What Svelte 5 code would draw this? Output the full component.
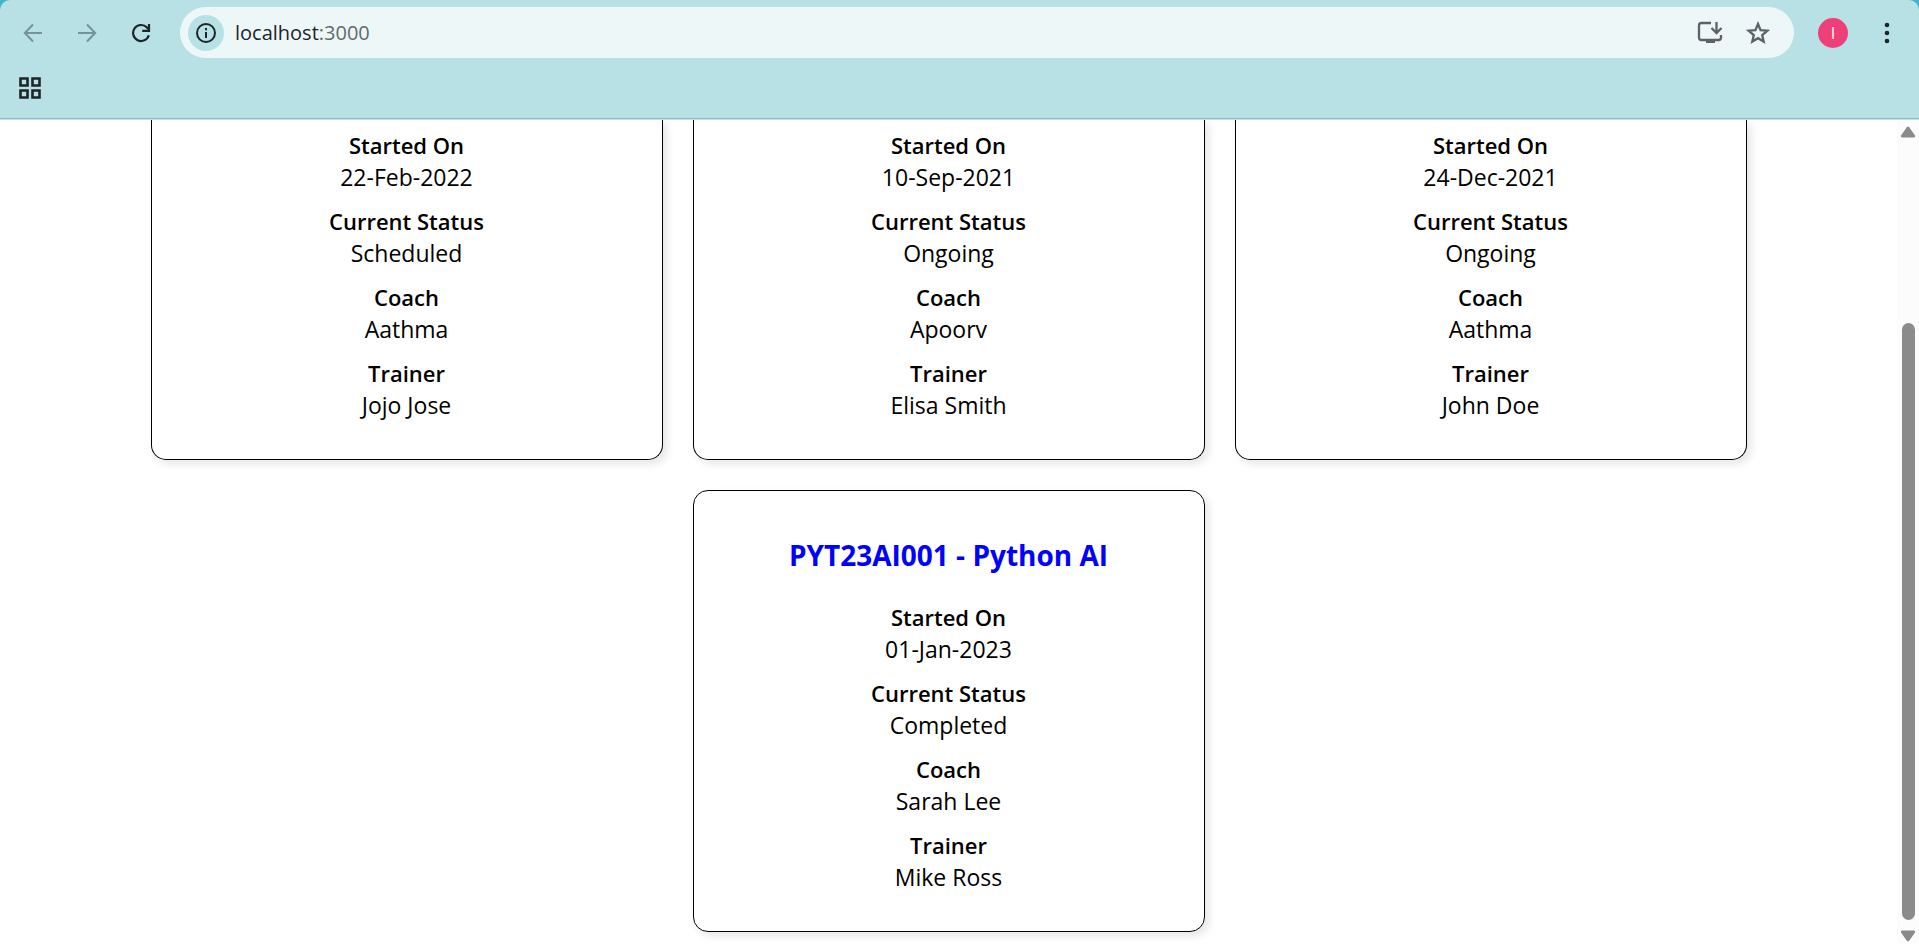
<script>
  const running = [
    { started: '22-Feb-2022', status: 'Scheduled', coach: 'Aathma', trainer: 'Jojo Jose' },
    { started: '10-Sep-2021', status: 'Ongoing', coach: 'Apoorv', trainer: 'Elisa Smith' },
    { started: '24-Dec-2021', status: 'Ongoing', coach: 'Aathma', trainer: 'John Doe' }
  ];
  const last = {
    title: 'PYT23AI001 - Python AI',
    started: '01-Jan-2023',
    status: 'Completed',
    coach: 'Sarah Lee',
    trainer: 'Mike Ross'
  };
</script>

{#snippet details(c)}
  <dl>
    <dt>Started On</dt>
    <dd>{c.started}</dd>
    <dt>Current Status</dt>
    <dd>{c.status}</dd>
    <dt>Coach</dt>
    <dd>{c.coach}</dd>
    <dt>Trainer</dt>
    <dd>{c.trainer}</dd>
  </dl>
{/snippet}

<div class="window">
  <header>
    <div class="chrome">
      <div class="toolbar">
        <nav>
          <button class="dim" aria-label="Back">
            <svg width="20" height="20" viewBox="0 0 20 20"><path d="M19 10H2M10 1.5 1.8 10l8.2 8.5" /></svg>
          </button>
          <button class="dim" aria-label="Forward">
            <svg width="20" height="20" viewBox="0 0 20 20"><path d="M1 10h17M10 1.5l8.2 8.5-8.2 8.5" /></svg>
          </button>
          <button aria-label="Reload">
            <svg width="20" height="20" viewBox="0 0 20 20">
              <path d="M17.8 12.2A8 8 0 1 1 16 4.6l1.2 1.5" stroke-width="2.2" />
              <path d="M18 1v6.8h-6.8" stroke-width="2.2" />
            </svg>
          </button>
        </nav>
        <div class="address">
          <button class="info" aria-label="View site information">
            <svg width="20" height="20" viewBox="0 0 20 20">
              <circle cx="10" cy="10" r="9" />
              <path d="M10 9v6M10 5v2.2" />
            </svg>
          </button>
          <span class="url" role="textbox" tabindex="0" aria-label="Address">localhost<span>:3000</span></span>
          <button class="tool" aria-label="Install app">
            <svg width="26" height="24" viewBox="0 0 26 24">
              <path d="M14 2H4.5A2.5 2.5 0 0 0 2 4.5v12A2.5 2.5 0 0 0 4.5 19h17a2.5 2.5 0 0 0 2.500-2.500V14" />
              <path d="M19.500 1v10M14.500 7l5 5 5-5" />
              <path d="M9 18.500h9V22H9z" fill="#5c6265" stroke="none" />
            </svg>
          </button>
          <button class="tool" aria-label="Bookmark this tab">
            <svg width="24" height="24" viewBox="0 0 24 24">
              <path d="m12 3 2.600 6.100 6.700.6-5.100 4.400 1.500 6.500L12 17.200l-5.700 3.400 1.500-6.500-5.100-4.400 6.700-.6z" />
            </svg>
          </button>
        </div>
        <button class="avatar" aria-label="Profile">I</button>
        <button class="menu" aria-label="Menu">
          <svg width="6" height="24" viewBox="0 0 6 24">
            <g fill="#1c2527" stroke="none">
              <circle cx="3" cy="4" r="2.300" /><circle cx="3" cy="12" r="2.300" /><circle cx="3" cy="20" r="2.300" />
            </g>
          </svg>
        </button>
      </div>
      <div class="bookmarks">
        <button aria-label="Apps">
          <svg width="22" height="22" viewBox="0 0 22 22">
            <path d="M1.500 1.500h7v7h-7zM13.500 1.500h7v7h-7zM1.500 13.500h7v7h-7zM13.500 13.500h7v7h-7z" stroke-width="2.600" />
          </svg>
        </button>
      </div>
    </div>
  </header>

  <div class="view">
    <main>
      {#each running as c}
        <article class="card cut">{@render details(c)}</article>
      {/each}
      <article class="card">
        <h3>{last.title}</h3>
        {@render details(last)}
      </article>
    </main>
    <div class="scrollbar" aria-hidden="true">
      <svg width="16" height="12" viewBox="0 0 16 12"><path d="M6.800 1.200 1 9.500Q.4 11.500 2 11.500h12q1.600 0 1-2L9.200 1.200Q8 0 6.800 1.200z" /></svg>
      <div class="track"><div class="thumb"></div></div>
      <svg width="16" height="12" viewBox="0 0 16 12"><path d="M6.800 10.800 1 2.500Q.4.500 2 .5h12q1.600 0 1 2l-5.800 8.300q-1.200 1.200-2.400 0z" /></svg>
    </div>
  </div>
</div>

<style>
  :global(body) {
    margin: 0;
    background: #fff;
  }
  .window {
    display: flex;
    flex-direction: column;
    height: 100vh;
    overflow: hidden;
    font-family: 'Segoe UI', 'Open Sans', 'Noto Sans', sans-serif;
    color: #000;
  }
  header {
    background: #48b2c8;
  }
  .chrome {
    background: #b8e1e6;
    border-radius: 10px 10px 0 0;
    border-bottom: 1px solid #90b8be;
    margin-bottom: 1px;
  }
  header {
    background: linear-gradient(#48b2c8 50%, #c3e2e6 50%);
  }
  .toolbar {
    display: flex;
    align-items: center;
    padding: 7px 17px 0 15px;
  }
  nav {
    display: flex;
    gap: 18px;
    margin-right: 21px;
  }
  button {
    display: flex;
    align-items: center;
    justify-content: center;
    width: 36px;
    height: 36px;
    padding: 0;
    border: 0;
    border-radius: 50%;
    background: none;
    font: inherit;
  }
  button svg {
    fill: none;
    stroke: #1c2527;
    stroke-width: 2;
  }
  .dim svg {
    stroke: #76939a;
  }
  .address {
    flex: 1;
    display: flex;
    align-items: center;
    height: 51px;
    padding: 0 18px 0 8px;
    border-radius: 26px;
    background: #edf7f8;
  }
  .info {
    background: #b8e1e6;
  }
  .url {
    flex: 1;
    margin-left: 11px;
    font-size: 20px;
    line-height: 28px;
    color: #1c2527;
  }
  .url span {
    color: #64696c;
  }
  .tool {
    margin-left: 12px;
  }
  .tool svg {
    stroke: #5c6265;
    stroke-width: 2.3;
  }
  .avatar {
    width: 30px;
    height: 30px;
    margin: 0 24px;
    background: #ee3f79;
    color: #fff;
    font-size: 16px;
  }
  .menu {
    width: 30px;
  }
  .bookmarks {
    padding: 12px;
  }
  .view {
    flex: 1;
    display: flex;
    min-height: 0;
  }
  main {
    flex: 1;
    display: flex;
    flex-wrap: wrap;
    justify-content: center;
    align-content: flex-start;
    gap: 30px;
    overflow: hidden;
  }
  .card {
    box-sizing: border-box;
    width: 512px;
    padding: 25px 25px 26px;
    border: 1px solid #000;
    border-radius: 15px;
    box-shadow: 4px 4px 8px rgba(0, 0, 0, 0.1);
    text-align: center;
  }
  .cut {
    padding-top: 9px;
    border-top: 0;
    border-radius: 0 0 15px 15px;
  }
  h3 {
    margin: 20px 0 27px;
    font-size: 28px;
    font-weight: 700;
    line-height: 38px;
    color: #00f;
  }
  dl {
    margin: 0;
    font-size: 23px;
    line-height: 32px;
  }
  dt {
    font-size: 22px;
    font-weight: 600;
  }
  dd {
    margin: 0 0 12px;
  }
  .scrollbar {
    display: flex;
    flex-direction: column;
    align-items: center;
    box-sizing: border-box;
    width: 22px;
    padding: 6px 0 2px;
    background: #fcfcfc;
  }
  .scrollbar svg {
    fill: #8b8b8b;
  }
  .track {
    flex: 1;
    display: flex;
    flex-direction: column;
    justify-content: flex-end;
    padding-bottom: 10px;
  }
  .thumb {
    width: 13px;
    height: calc(76% + 3px);
    border-radius: 7px;
    background: #8b8b8b;
  }
</style>
